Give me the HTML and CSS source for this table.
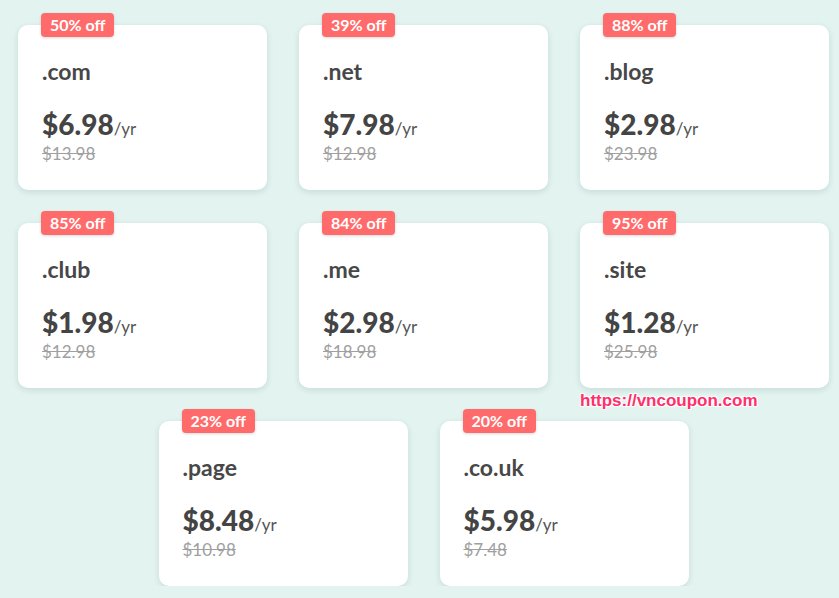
FILE: index.html
```html
<!DOCTYPE html>
<html>
<head>
<meta charset="utf-8">
<link rel="stylesheet" href="styles.css">
</head>
<body>
<div class="grid">
  <div class="card"><span class="badge">50% off</span><div class="tld">.com</div><div class="price">$6.98<span class="per">/yr</span></div><div class="old">$13.98</div></div>
  <div class="card"><span class="badge">39% off</span><div class="tld">.net</div><div class="price">$7.98<span class="per">/yr</span></div><div class="old">$12.98</div></div>
  <div class="card"><span class="badge">88% off</span><div class="tld">.blog</div><div class="price">$2.98<span class="per">/yr</span></div><div class="old">$23.98</div></div>
  <div class="card"><span class="badge">85% off</span><div class="tld">.club</div><div class="price">$1.98<span class="per">/yr</span></div><div class="old">$12.98</div></div>
  <div class="card"><span class="badge">84% off</span><div class="tld">.me</div><div class="price">$2.98<span class="per">/yr</span></div><div class="old">$18.98</div></div>
  <div class="card"><span class="badge">95% off</span><div class="tld">.site</div><div class="price">$1.28<span class="per">/yr</span></div><div class="old">$25.98</div><span class="watermark">https://vncoupon.com</span></div>
  <div class="card"><span class="badge">23% off</span><div class="tld">.page</div><div class="price">$8.48<span class="per">/yr</span></div><div class="old">$10.98</div></div>
  <div class="card"><span class="badge">20% off</span><div class="tld">.co.uk</div><div class="price">$5.98<span class="per">/yr</span></div><div class="old">$7.48</div></div>
</div>
</body>
</html>
```
FILE: styles.css
```css
html, body {
  margin: 0;
  padding: 0;
  background: #e2f3f0;
  font-family: "Lato", "Noto Sans", sans-serif;
}
.grid {
  width: 811px;
  margin-left: 18px;
  padding-top: 25px;
  display: flex;
  flex-wrap: wrap;
  justify-content: center;
  column-gap: 32px;
  row-gap: 33px;
}
.card {
  position: relative;
  box-sizing: border-box;
  width: 249px;
  height: 165px;
  background: #fff;
  border-radius: 10px;
  box-shadow: 0 2px 6px rgba(0, 60, 50, 0.12);
  padding: 33px 24px 0 24px;
  color: #444;
}
.badge {
  position: absolute;
  left: 23px;
  top: -12px;
  height: 24px;
  line-height: 24px;
  padding: 0 9px;
  border-radius: 4px;
  background: #ff6b6b;
  color: #fff;
  font-weight: 700;
  font-size: 16px;
  box-shadow: 0 1px 3px rgba(0,0,0,0.15);
}
.tld {
  font-size: 23px;
  font-weight: 700;
  line-height: 26px;
  color: #474747;
}
.price {
  margin-top: 25px;
  font-size: 28px;
  font-weight: 900;
  line-height: 30px;
  color: #444;
}
.per {
  font-size: 17px;
  font-weight: 400;
  color: #555;
}
.old {
  font-size: 17px;
  line-height: 20px;
  color: #a0a0a0;
  text-decoration: line-through;
}
.watermark {
  position: absolute;
  left: 0;
  top: 168px;
  font-family: "Liberation Sans", Arial, sans-serif;
  font-weight: 700;
  font-size: 17px;
  color: #ff2f6c;
  text-shadow: 1px 1px 1px #fff, -1px -1px 1px #fff, 1px -1px 1px #fff, -1px 1px 1px #fff;
  white-space: nowrap;
}
```
